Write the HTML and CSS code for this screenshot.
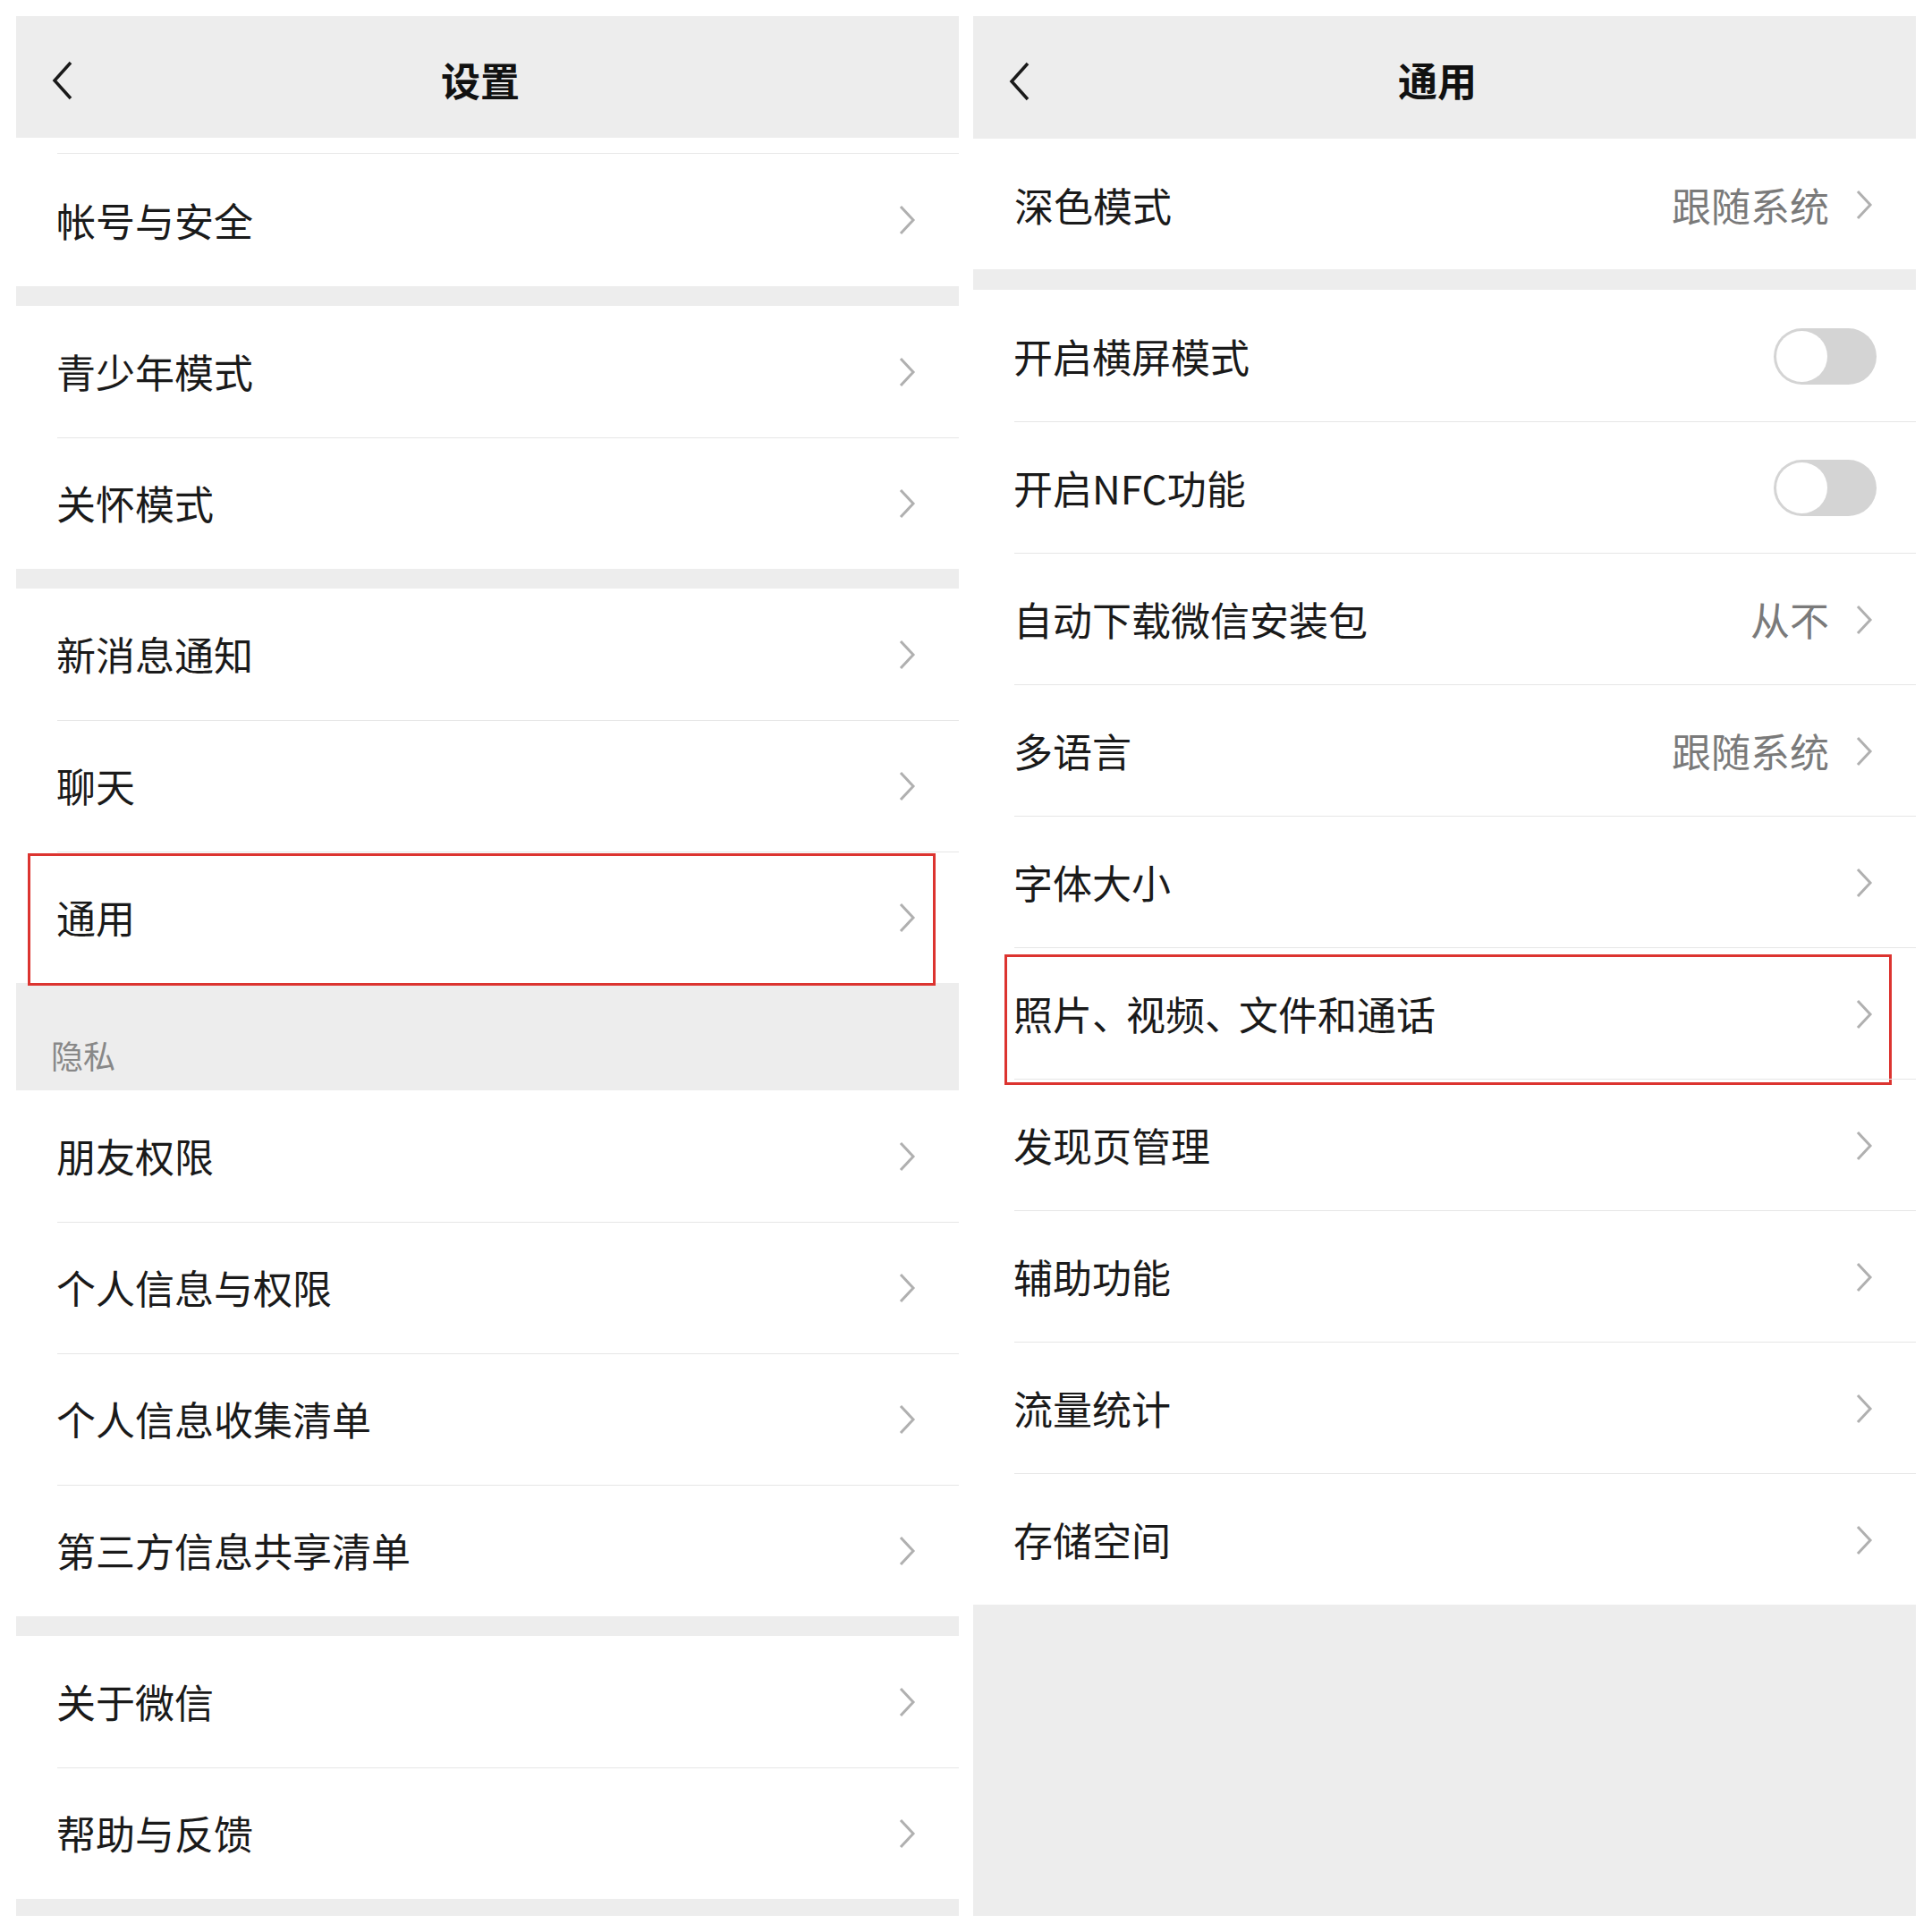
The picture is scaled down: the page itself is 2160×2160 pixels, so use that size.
FILE: index.html
```html
<!DOCTYPE html>
<html lang="zh-CN">
<head>
<meta charset="utf-8">
<title>设置 / 通用</title>
<link rel="stylesheet" href="styles.css">
</head>
<body>
<div class="page">
  <section class="panel">
    <header class="nav">
      <svg class="back" width="24" height="44" viewBox="0 0 24 44"><polyline points="21,2 3,22 21,42" fill="none" stroke="#1a1a1a" stroke-width="3.5" stroke-linejoin="miter"/></svg>
      <h1 class="title">设置</h1>
    </header>
    <div class="strip"></div>
    <div class="group">
      <div class="row row-first"><span class="label">帐号与安全</span><svg class="chev" width="20" height="34" viewBox="0 0 20 34"><polyline points="3,2 17,17 3,32" fill="none" stroke="#b0b0b0" stroke-width="3"/></svg></div>
    </div>
    <div class="band"></div>
    <div class="group">
      <div class="row"><span class="label">青少年模式</span><svg class="chev" width="20" height="34" viewBox="0 0 20 34"><polyline points="3,2 17,17 3,32" fill="none" stroke="#b0b0b0" stroke-width="3"/></svg></div>
      <div class="row"><span class="label">关怀模式</span><svg class="chev" width="20" height="34" viewBox="0 0 20 34"><polyline points="3,2 17,17 3,32" fill="none" stroke="#b0b0b0" stroke-width="3"/></svg></div>
    </div>
    <div class="band"></div>
    <div class="group">
      <div class="row"><span class="label">新消息通知</span><svg class="chev" width="20" height="34" viewBox="0 0 20 34"><polyline points="3,2 17,17 3,32" fill="none" stroke="#b0b0b0" stroke-width="3"/></svg></div>
      <div class="row"><span class="label">聊天</span><svg class="chev" width="20" height="34" viewBox="0 0 20 34"><polyline points="3,2 17,17 3,32" fill="none" stroke="#b0b0b0" stroke-width="3"/></svg></div>
      <div class="row marked marked-left"><span class="label">通用</span><svg class="chev" width="20" height="34" viewBox="0 0 20 34"><polyline points="3,2 17,17 3,32" fill="none" stroke="#b0b0b0" stroke-width="3"/></svg></div>
    </div>
    <div class="section-title">隐私</div>
    <div class="group">
      <div class="row"><span class="label">朋友权限</span><svg class="chev" width="20" height="34" viewBox="0 0 20 34"><polyline points="3,2 17,17 3,32" fill="none" stroke="#b0b0b0" stroke-width="3"/></svg></div>
      <div class="row"><span class="label">个人信息与权限</span><svg class="chev" width="20" height="34" viewBox="0 0 20 34"><polyline points="3,2 17,17 3,32" fill="none" stroke="#b0b0b0" stroke-width="3"/></svg></div>
      <div class="row"><span class="label">个人信息收集清单</span><svg class="chev" width="20" height="34" viewBox="0 0 20 34"><polyline points="3,2 17,17 3,32" fill="none" stroke="#b0b0b0" stroke-width="3"/></svg></div>
      <div class="row"><span class="label">第三方信息共享清单</span><svg class="chev" width="20" height="34" viewBox="0 0 20 34"><polyline points="3,2 17,17 3,32" fill="none" stroke="#b0b0b0" stroke-width="3"/></svg></div>
    </div>
    <div class="band"></div>
    <div class="group">
      <div class="row"><span class="label">关于微信</span><svg class="chev" width="20" height="34" viewBox="0 0 20 34"><polyline points="3,2 17,17 3,32" fill="none" stroke="#b0b0b0" stroke-width="3"/></svg></div>
      <div class="row"><span class="label">帮助与反馈</span><svg class="chev" width="20" height="34" viewBox="0 0 20 34"><polyline points="3,2 17,17 3,32" fill="none" stroke="#b0b0b0" stroke-width="3"/></svg></div>
    </div>
    <div class="fill"></div>
  </section>

  <section class="panel panel-right">
    <header class="nav">
      <svg class="back" width="24" height="44" viewBox="0 0 24 44"><polyline points="21,2 3,22 21,42" fill="none" stroke="#1a1a1a" stroke-width="3.5" stroke-linejoin="miter"/></svg>
      <h1 class="title">通用</h1>
    </header>
    <div class="group">
      <div class="row row-short"><span class="label">深色模式</span><span class="value">跟随系统</span><svg class="chev" width="20" height="34" viewBox="0 0 20 34"><polyline points="3,2 17,17 3,32" fill="none" stroke="#b0b0b0" stroke-width="3"/></svg></div>
    </div>
    <div class="band band-r"></div>
    <div class="group">
      <div class="row"><span class="label">开启横屏模式</span><span class="toggle"></span></div>
      <div class="row"><span class="label">开启NFC功能</span><span class="toggle"></span></div>
      <div class="row"><span class="label">自动下载微信安装包</span><span class="value">从不</span><svg class="chev" width="20" height="34" viewBox="0 0 20 34"><polyline points="3,2 17,17 3,32" fill="none" stroke="#b0b0b0" stroke-width="3"/></svg></div>
      <div class="row"><span class="label">多语言</span><span class="value">跟随系统</span><svg class="chev" width="20" height="34" viewBox="0 0 20 34"><polyline points="3,2 17,17 3,32" fill="none" stroke="#b0b0b0" stroke-width="3"/></svg></div>
      <div class="row"><span class="label">字体大小</span><svg class="chev" width="20" height="34" viewBox="0 0 20 34"><polyline points="3,2 17,17 3,32" fill="none" stroke="#b0b0b0" stroke-width="3"/></svg></div>
      <div class="row marked marked-right"><span class="label">照片<span class="punct">、</span>视频<span class="punct">、</span>文件和通话</span><svg class="chev" width="20" height="34" viewBox="0 0 20 34"><polyline points="3,2 17,17 3,32" fill="none" stroke="#b0b0b0" stroke-width="3"/></svg></div>
      <div class="row"><span class="label">发现页管理</span><svg class="chev" width="20" height="34" viewBox="0 0 20 34"><polyline points="3,2 17,17 3,32" fill="none" stroke="#b0b0b0" stroke-width="3"/></svg></div>
      <div class="row"><span class="label">辅助功能</span><svg class="chev" width="20" height="34" viewBox="0 0 20 34"><polyline points="3,2 17,17 3,32" fill="none" stroke="#b0b0b0" stroke-width="3"/></svg></div>
      <div class="row"><span class="label">流量统计</span><svg class="chev" width="20" height="34" viewBox="0 0 20 34"><polyline points="3,2 17,17 3,32" fill="none" stroke="#b0b0b0" stroke-width="3"/></svg></div>
      <div class="row"><span class="label">存储空间</span><svg class="chev" width="20" height="34" viewBox="0 0 20 34"><polyline points="3,2 17,17 3,32" fill="none" stroke="#b0b0b0" stroke-width="3"/></svg></div>
    </div>
    <div class="fill"></div>
  </section>
</div>
</body>
</html>
```

FILE: styles.css
```css
* { box-sizing: border-box; }

html, body {
  margin: 0;
  padding: 0;
  background: #ffffff;
}

body {
  font-family: "Noto Sans CJK SC", "Noto Sans", sans-serif;
  color: #1a1a1a;
}

.page {
  display: flex;
  gap: 16px;
  padding: 18px 18px 0 18px;
  height: 2142px;
}

.panel {
  width: 1054px;
  display: flex;
  flex-direction: column;
  background: #ffffff;
}

.nav {
  height: 136px;
  flex: none;
  background: #ededed;
  display: flex;
  align-items: center;
  position: relative;
  padding-left: 40px;
  padding-top: 6px;
}

.panel-right .nav { height: 137px; }

.back {
  display: block;
  flex: none;
  margin-top: 2px;
}

.title {
  margin: 0;
  flex: 1;
  text-align: center;
  font-size: 44px;
  font-weight: 700;
  line-height: 1.2;
  padding-right: 80px;
  color: #111111;
}

.strip {
  height: 18px;
  flex: none;
  margin-left: 46px;
  border-bottom: 1px solid #e8e8e8;
}

.group {
  display: flex;
  flex-direction: column;
  background: #ffffff;
}

.row {
  height: 147px;
  flex: none;
  display: flex;
  align-items: center;
  padding: 0 48px 0 45px;
  position: relative;
  font-size: 44px;
  line-height: 1.2;
}

.panel-right .row { padding-top: 2px; }

.row-first { height: 148px; }
.row-short { height: 146px; padding-left: 46px; }

.row + .row::before {
  content: "";
  position: absolute;
  top: 0;
  left: 46px;
  right: 0;
  height: 1px;
  background: #e6e6e6;
}

.label {
  flex: 1;
  color: #1a1a1a;
  white-space: nowrap;
}

.punct {
  letter-spacing: -8px;
  margin-right: 2px;
}

.value {
  color: #7a7a7a;
  margin-right: 29px;
}

.chev {
  display: block;
  flex: none;
}

.toggle {
  width: 115px;
  height: 63px;
  border-radius: 32px;
  background: #d4d4d4;
  position: relative;
  margin-right: -4px;
  flex: none;
}

.toggle::after {
  content: "";
  position: absolute;
  left: 3px;
  top: 3px;
  width: 57px;
  height: 57px;
  border-radius: 50%;
  background: #ffffff;
}

.band {
  height: 22px;
  flex: none;
  background: #ededed;
}

.band-r { height: 23px; }

.section-title {
  height: 120px;
  flex: none;
  background: #ededed;
  display: flex;
  align-items: flex-end;
  padding: 0 0 18px 39px;
  font-size: 36px;
  line-height: 1.2;
  color: #888888;
}

.fill {
  flex: 1;
  background: #ededed;
}

.marked::after {
  content: "";
  position: absolute;
  border: 3px solid #dc3430;
  pointer-events: none;
}

.marked-left::after {
  left: 13px;
  right: 26px;
  top: 2px;
  bottom: -3px;
}

.marked-right::after {
  left: 35px;
  right: 27px;
  top: 8px;
  bottom: -7px;
}
```
